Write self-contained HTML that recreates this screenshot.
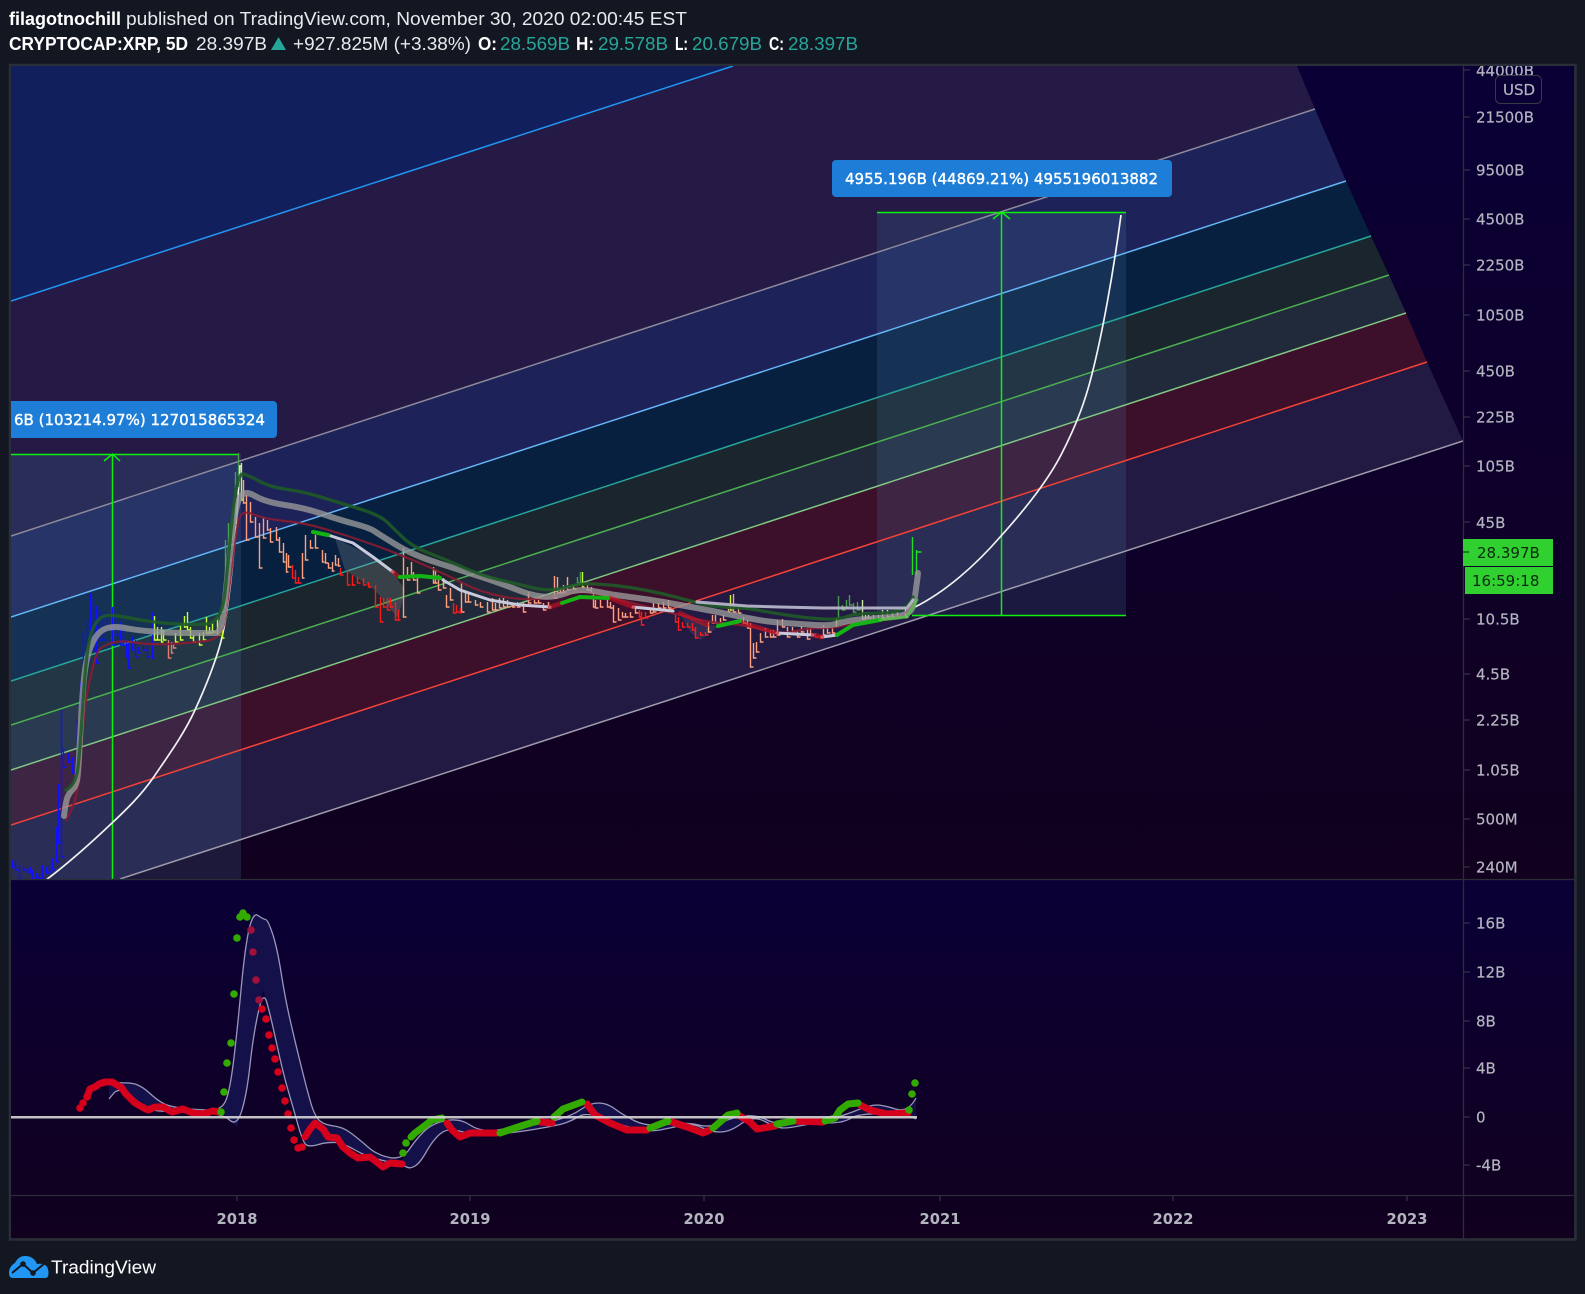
<!DOCTYPE html>
<html><head><meta charset="utf-8"><title>CRYPTOCAP:XRP</title>
<style>html,body{margin:0;padding:0;background:#131722;width:1585px;height:1294px;overflow:hidden}svg{display:block}
.a{font:15px "DejaVu Sans",sans-serif;fill:#b2b5be;stroke:#b2b5be;stroke-width:.2}.h{font:18px "Liberation Sans",sans-serif;fill:#e8e9ec}.b{font-weight:bold;fill:#fff}.t{fill:#26a69a}
.x{font:bold 14.7px "DejaVu Sans",sans-serif;fill:#b2b5be;text-anchor:middle}</style></head><body>
<svg width="1585" height="1294" viewBox="0 0 1585 1294" xmlns="http://www.w3.org/2000/svg">
<defs>
<linearGradient id="g1" x1="0" y1="0" x2="0" y2="1"><stop offset="0" stop-color="#0a0036"/><stop offset="1" stop-color="#11001e"/></linearGradient>
<clipPath id="c"><rect x="11" y="66" width="1452" height="813"/></clipPath>
<clipPath id="ca"><rect x="1464" y="66" width="110" height="813"/></clipPath>
</defs>
<rect width="1585" height="1294" fill="#131722"/>
<text class="h" y="25"><tspan class="b" x="9">filagotnochill</tspan></text>
<text class="h" x="126" y="25" textLength="561" lengthAdjust="spacingAndGlyphs">published on TradingView.com, November 30, 2020 02:00:45 EST</text>
<text class="h b" x="9" y="50" textLength="179" lengthAdjust="spacingAndGlyphs">CRYPTOCAP:XRP, 5D</text>
<text class="h" x="196" y="50" textLength="71" lengthAdjust="spacingAndGlyphs">28.397B</text>
<path d="M278.500 37L286 50H271Z" fill="#26a69a"/>
<text class="h" x="293" y="50" textLength="178" lengthAdjust="spacingAndGlyphs">+927.825M (+3.38%)</text>
<text class="h b" x="478" y="50" textLength="19" lengthAdjust="spacingAndGlyphs">O:</text><text class="h t" x="500" y="50" textLength="70" lengthAdjust="spacingAndGlyphs">28.569B</text>
<text class="h b" x="576" y="50" textLength="18" lengthAdjust="spacingAndGlyphs">H:</text><text class="h t" x="598" y="50" textLength="70" lengthAdjust="spacingAndGlyphs">29.578B</text>
<text class="h b" x="675" y="50" textLength="13" lengthAdjust="spacingAndGlyphs">L:</text><text class="h t" x="692" y="50" textLength="70" lengthAdjust="spacingAndGlyphs">20.679B</text>
<text class="h b" x="769" y="50" textLength="15" lengthAdjust="spacingAndGlyphs">C:</text><text class="h t" x="788" y="50" textLength="70" lengthAdjust="spacingAndGlyphs">28.397B</text>

<rect x="10" y="65" width="1565.500" height="1174.500" fill="none" stroke="#2a2e39" stroke-width="2.500"/>
<rect x="11" y="66" width="1563" height="813" fill="url(#g1)"/>
<rect x="11" y="880" width="1563" height="358" fill="url(#g1)"/>

<g clip-path="url(#c)">
<polygon points="11,66 733,66 11,301" fill="#11205c"/>
<polygon points="11,301 733,66 1297,66 1315,109 11,536" fill="#241a45"/>
<polygon points="11,536 1315,109 1346,181 11,617" fill="#1d2258"/>
<polygon points="11,617 1346,181 1371,236 11,681" fill="#08203f"/>
<polygon points="11,681 1371,236 1389,275 11,725" fill="#1a252e"/>
<polygon points="11,725 1389,275 1406,313 11,770" fill="#212a3b"/>
<polygon points="11,770 1406,313 1427,362 11,825" fill="#3c0f2b"/>
<polygon points="11,825 1427,362 1463,441 120,879 11,879" fill="#221a42"/>
<rect x="11" y="454" width="230" height="425" fill="#4b7daa" opacity=".2"/>
<rect x="877" y="212" width="249" height="403" fill="#4b7daa" opacity=".2"/>
<g fill="none" stroke-width="1.500">
<path d="M11 301L733 66" stroke="#2196f3"/>
<path d="M11 536L1315 109" stroke="#8d8a9c"/>
<path d="M11 617L1346 181" stroke="#64b5f6"/>
<path d="M11 681L1371 236" stroke="#26a69a"/>
<path d="M11 725L1389 275" stroke="#4caf50"/>
<path d="M11 770L1406 313" stroke="#81c784"/>
<path d="M11 825L1427 362" stroke="#f44336"/>
<path d="M120 879L1463 441" stroke="#9d9bab"/>
</g>
<g fill="none" stroke="#0cf00c" stroke-width="1.500">
<path d="M11 454.500H238M112.500 879V454M104 461L112.500 454L120 461"/>
<path d="M877 212.500H1126M1001.500 615V212M993 219L1001.500 212L1010 219M912 615.500H1126"/>
</g>
<g fill="none" stroke="#f2f2f2" stroke-width="1.700" stroke-linejoin="round">
<path d="M46 880C70 862 92 842 112 823C128 808 142 794 153 778C168 756 184 734 195 710C206 686 214 666 220 645C226 624 230 590 233 560C236 530 238 500 240 465"/>
<path d="M915 607C945 592 975 566 1001 536C1028 506 1048 480 1061 455C1078 422 1086 398 1092 374C1102 335 1113 275 1121 215"/>
</g>
<polygon points="335,538 373,557 393,572 405,590 398,618 375,590 345,570" fill="#b4b4b4" opacity=".2"/>
<polygon points="680,613 707,625 720,626 700,640 690,632" fill="#b4b4b4" opacity=".12"/>
<g fill="none" stroke-width="1.400" transform="translate(.5 0)">
<path stroke="#1010ff" d="M12 860V867h3M15 862V870h3M19 865V879h3M23 867V870h3M27 868V872h3M30 867V873h2M32 870V879h3M36 873V878h3M39 874V879h3M42 865V879h3M46 867V873h3M49 865V872h3M52 858V870h3M56 827V862h3M58 784V843h3M61 710V857h3M63 748V767h3M68 753V762h3M72 757V773h3M75 755V772h2M77 719V757h3M80 682V707h2M83 632V667h3M87 620V660h3M90 593V640h3M93 599V650h3M96 606V663h3M99 610V640h3M103 612V640h3M107 613V630h3M112 607V645h3M115 617V635h3M120 622V645h3M123 625V645h3M126 640V657h2M128 643V668h3M132 637V650h3M135 640V657h3M138 647V653h3M143 642V650h3M147 643V657h3M152 612V658h2"/>
<path stroke="#c8ff2e" d="M154 616V640h3M157 627V640h3M161 627V642h2M163 630V640h3M175 633V642h3M180 626V640h3M184 616V627h3M187 612V630h3M190 627V638h3M193 635V642h3M199 633V645h3M203 632V640h3M206 617V633h3M209 627V633h3M212 623V632h3M217 617V635h3M222 625V638h2M241 463V500h2M573 585V589h3M582 572V587h2M730 595V610h2M836 618V627h2"/>
<path stroke="#e07a6a" d="M168 640V658h3M171 642V653h2M173 643V648h3"/>
<path stroke="#4a9c50" d="M225 540V617h2M228 523V560h3M232 517V540h2M235 472V525h2M238 453V487M577 577V583h3M580 572V583h2M838 596V620h3M842 605V610h3M846 600V607h2M849 595V605h3M853 603V612h3M857 602V610h3"/>
<path stroke="#ffa07e" d="M243 480V503h3M246 495V540h3M250 502V522h3M255 517V537h3M259 523V568h3M263 518V538h3M267 520V530h2M270 528V542h3M276 527V540h3M279 537V552h3M283 543V562h2M286 553V572h2M288 555V567h3M302 553V578h2M305 535V560h3M310 540V548h3M315 535V548h3M322 550V562h2M325 553V563h3M328 563V568h3M332 562V571h2M335 555V565h2M338 558V566h2M403 548V617h3M407 567V580h3M411 562V575h2M413 572V580h3M417 578V593h3M433 567V583h2M435 570V583h2M438 575V590h3M443 578V588h3M446 595V607h3M450 588V600h3M461 582V612h3M465 592V602h3M468 593V602h3M475 600V605h3M480 602V607h3M487 602V612h3M492 598V610h3M495 603V610h3M499 598V608h3M503 598V607h3M507 600V607h3M512 603V607h3M517 602V607h3M523 603V612h3M528 592V603h3M534 597V603h3M538 600V603h3M543 603V610h3M548 602V608h3M554 576V598h3M557 577V593h3M560 588V593h3M563 585V592h3M567 577V590h3M587 585V590h3M591 587V593h2M593 592V607h2M595 600V608h3M600 600V607h3M607 600V607h3M610 602V608h3M613 605V622h3M618 608V620h3M622 612V617h3M625 613V617h3M630 612V617h3M635 607V613h3M650 608V613h3M653 603V612h3M658 603V608h3M663 602V608h3M668 600V608h3M708 622V632h3M712 615V623h3M715 615V623h3M720 618V623h3M723 615V620h3M728 607V612h2M733 594V612h3M738 607V613h3M743 617V623h3M747 620V628h3M750 623V667h3M753 643V658h3M756 642V652h3M760 633V642h3M765 628V637h3M770 630V637h3M773 630V637h3M777 620V635h3M782 619V627h3M787 627V637h3M792 627V632h3M797 630V637h3M801 626V632h3M807 628V639h3M810 628V635h3M823 625V635h3M827 628V633h3M832 627V633h3"/>
<path stroke="#ff1a1a" d="M292 565V578h3M295 570V583h3M298 577V583h3M340 568V575h3M347 570V585h3M352 575V585h3M357 577V583h3M363 578V585h3M368 582V587h3M375 585V607h3M380 597V622h3M383 598V607h3M387 598V610h3M390 598V607h3M395 602V620h3M398 610V620h2M453 603V613h3M456 605V612h3M460 608V613h1M639 610V617h2M641 612V625h3M645 612V618h3M675 613V622h3M678 617V630h3M682 622V627h3M687 623V627h3M692 623V630h3M695 627V638h3M700 632V635h3M705 632V635h3M815 633V637h3M820 635V638h3"/>
<path stroke="#cfea9a" d="M862 600V619h3M865 615V618h3M868 615V618h3M873 615V620h3M878 615V620h3M882 610V618h3M887 610V617h3M892 612V617h3M897 612V617h3M905 607V617h3"/>
<path stroke="#1fe01f" d="M912 537V575M916 550V575M916 552H921"/>
</g>
<g fill="none" stroke-linejoin="round" stroke-linecap="round">
<path stroke="#8a1c32" stroke-width="2.200" opacity=".9" d="M66 820Q72 810 75 800Q78 790 81.500 745Q85 700 90 679Q95 658 97.500 652.500Q100 647 110 643.500Q120 640 135 642.500Q150 645 170 644Q190 643 206 641Q222 639 225 619.500Q228 600 232.500 561.500Q237 523 240 516.500Q243 510 254 514.500Q265 519 285 521Q305 523 325 529Q345 535 362.500 541Q380 547 396.500 553.500Q413 560 430 567.500Q447 575 463.500 583.500Q480 592 500 596Q520 600 535 599Q550 598 565 594Q580 590 596.500 594Q613 598 630 602.500Q647 607 663.500 611Q680 615 696.500 619Q713 623 730 624Q747 625 763.500 630Q780 635 793.500 631.500Q807 628 822 628Q837 628 843.500 625.500Q850 623 878.500 620.500Q907 618 913 603"/>
<path stroke="#9a9a9a" stroke-width="6" opacity=".78" d="M64 816Q66 800 68 796Q70 792 73 789Q76 786 77 780.500Q78 775 79 757.500Q80 740 81 720Q82 700 83.500 683.500Q85 667 87.500 656.500Q90 646 95 638Q100 630 107.500 628Q115 626 125 628Q135 630 152.500 631.500Q170 633 190 633Q210 633 216 633Q222 633 225 600Q228 567 232 535Q236 503 240.500 496.500Q245 490 255 496Q265 502 285 505Q305 508 322.500 514Q340 520 355 524Q370 528 375 531.500Q380 535 396.500 545Q413 555 436.500 562.500Q460 570 480 576.500Q500 583 515 589Q530 595 541.500 596.500Q553 598 566.500 593Q580 588 596.500 591.500Q613 595 630 597Q647 599 663.500 602Q680 605 696.500 608Q713 611 730 614.500Q747 618 758.500 620Q770 622 785 623Q800 624 815 625Q830 626 840 623Q850 620 865 619Q880 618 895 616.500Q910 615 912.500 607.500Q915 600 918 573"/>
<path stroke="#1f5a28" stroke-width="3.300" opacity=".9" d="M66 790Q76 785 78 767.500Q80 750 82.500 710Q85 670 87.500 651.500Q90 633 95 624.500Q100 616 107.500 615.500Q115 615 132.500 618.500Q150 622 170 623.500Q190 625 206 624Q222 623 225 591.500Q228 560 232.500 516Q237 472 243.500 474Q250 476 260 481.500Q270 487 287.500 489.500Q305 492 322.500 497.500Q340 503 360 509Q380 515 387.500 522.500Q395 530 404 538.500Q413 547 430 553.500Q447 560 463.500 567.500Q480 575 496.500 579Q513 583 531.500 587.500Q550 592 565 587.500Q580 583 596.500 584Q613 585 630 587.500Q647 590 663.500 594Q680 598 696.500 602.500Q713 607 730 607.500Q747 608 760 610.500Q773 613 790 615.500Q807 618 822 619Q837 620 847 616.500Q857 613 882 613Q907 613 913 597"/>
<path stroke="#bcbcd2" stroke-width="3" opacity=".9" d="M697 602L747 606L780 607L823 608L907 608L913 600"/>
<path stroke="#c9c9dc" stroke-width="3" d="M328 535L353 543L373 557L393 572M443 580L460 590L490 600L520 605L550 607M633 607L673 611M777 633L813 635M822 637L837 635"/>
<path stroke="#d0101f" stroke-width="4.500" opacity=".6" d="M393 572L398 576M550 607L562 603M610 598L633 607M680 613L707 625M743 623L777 633M813 635L822 637"/>
<path stroke="#14b414" stroke-width="4" d="M313 532L328 535M400 577L420 576L440 578M562 603L580 597L608 598M718 626L740 621M837 635L853 625L880 620"/>
<path stroke="#4ccc3c" stroke-width="3" opacity=".7" d="M880 620L907 617L917 600"/>
</g>
<rect x="-10" y="401" width="287" height="37" rx="4" fill="#1e7dd6"/>
<text x="14" y="425" style="font:15px 'DejaVu Sans',sans-serif;fill:#fff;stroke:#fff;stroke-width:.4">6B (103214.97%) 127015865324</text>
<rect x="832" y="160" width="340" height="37" rx="4" fill="#1e7dd6"/>
<text x="845" y="184" style="font:15px 'DejaVu Sans',sans-serif;fill:#fff;stroke:#fff;stroke-width:.4">4955.196B (44869.21%) 4955196013882</text>
</g>

<polygon fill="#14104a" points="109,1083 130,1082 143,1087 157,1100 170,1107 200,1110 222,1110 230,1090 237,1033 245,947 253,912 263,919 268,920 277,947 285,997 293,1033 307,1090 315,1117 325,1125 343,1127 360,1140 377,1155 402,1160 417,1138 433,1123 460,1118 480,1132 513,1128 547,1123 573,1115 590,1103 607,1103 623,1115 647,1127 687,1122 710,1128 733,1117 757,1115 777,1125 813,1122 840,1117 870,1105 883,1105 908,1113 916,1098 916,1119 910,1115 860,1113 843,1123 813,1123 790,1128 777,1128 753,1115 730,1132 710,1132 693,1123 670,1128 650,1132 620,1125 587,1112 573,1120 560,1125 513,1133 480,1135 467,1133 447,1128 433,1140 420,1163 410,1169 403,1165 367,1157 343,1143 327,1142 310,1147 303,1143 293,1107 283,1073 270,1013 263,990 253,1037 247,1093 237,1127 222,1113 173,1112 147,1110 133,1097 118,1088 109,1099"/>
<g fill="none" stroke="#9a97b8" stroke-width="1.300" stroke-linejoin="round">
<path d="M109 1083Q130 1082 136.500 1084.500Q143 1087 150 1093.500Q157 1100 163.500 1103.500Q170 1107 185 1108.500Q200 1110 211 1110Q222 1110 226 1100Q230 1090 233.500 1061.500Q237 1033 241 990Q245 947 249 929.500Q253 912 258 915.500Q263 919 265.500 919.500Q268 920 272.500 933.500Q277 947 281 972Q285 997 289 1015Q293 1033 300 1061.500Q307 1090 311 1103.500Q315 1117 320 1121Q325 1125 334 1126Q343 1127 351.500 1133.500Q360 1140 368.500 1147.500Q377 1155 389.500 1157.500Q402 1160 409.500 1149Q417 1138 425 1130.500Q433 1123 446.500 1120.500Q460 1118 470 1125Q480 1132 496.500 1130Q513 1128 530 1125.500Q547 1123 560 1119Q573 1115 581.500 1109Q590 1103 598.500 1103Q607 1103 615 1109Q623 1115 635 1121Q647 1127 667 1124.500Q687 1122 698.500 1125Q710 1128 721.500 1122.500Q733 1117 745 1116Q757 1115 767 1120Q777 1125 795 1123.500Q813 1122 826.500 1119.500Q840 1117 855 1111Q870 1105 876.500 1105Q883 1105 895.500 1109Q908 1113 916 1098"/>
<path d="M109 1099L113.500 1093.500Q118 1088 125.500 1092.500Q133 1097 140 1103.500Q147 1110 160 1111Q173 1112 197.500 1112.500Q222 1113 229.500 1120Q237 1127 242 1110Q247 1093 250 1065Q253 1037 258 1013.500Q263 990 266.500 1001.500Q270 1013 276.500 1043Q283 1073 288 1090Q293 1107 298 1125Q303 1143 306.500 1145Q310 1147 318.500 1144.500Q327 1142 335 1142.500Q343 1143 355 1150Q367 1157 385 1161Q403 1165 406.500 1167Q410 1169 415 1166Q420 1163 426.500 1151.500Q433 1140 440 1134Q447 1128 457 1130.500Q467 1133 473.500 1134Q480 1135 496.500 1134Q513 1133 536.500 1129Q560 1125 566.500 1122.500Q573 1120 580 1116Q587 1112 603.500 1118.500Q620 1125 635 1128.500Q650 1132 660 1130Q670 1128 681.500 1125.500Q693 1123 701.500 1127.500Q710 1132 720 1132Q730 1132 741.500 1123.500Q753 1115 765 1121.500Q777 1128 783.500 1128Q790 1128 801.500 1125.500Q813 1123 828 1123Q843 1123 851.500 1118Q860 1113 885 1114Q910 1115 916 1119"/>
</g>
<g fill="none" stroke-width="7" stroke-linecap="round" stroke-linejoin="round">
<path stroke="#d4001c" d="M87 1097L90 1089L95 1087L99 1084L105 1082L112 1082L117 1085L122 1088L125 1093L130 1098L135 1103L142 1107L148 1110L155 1107L163 1107L172 1112L183 1109L193 1113L203 1114L213 1111L220 1112"/>
<path stroke="#d4001c" d="M305 1137L310 1129L315 1123L323 1129L328 1137L337 1138L343 1147L350 1153L358 1158L370 1157L378 1163L383 1167L390 1163L402 1164M447 1123L452 1130L460 1137L470 1133L480 1133L497 1133M540 1122L552 1123M587 1104L595 1115L610 1123L627 1130L647 1130M672 1122L690 1128L703 1133L710 1130M738 1115L750 1122L757 1129L775 1126M795 1121L823 1122M860 1105L870 1110L887 1114L908 1113"/>
<path stroke="#33aa00" d="M411 1137L415 1133L423 1127L432 1120L442 1118M500 1133L518 1127L537 1121M554 1117L563 1109L582 1102M650 1128L668 1121M713 1128L728 1115L737 1113M777 1124L793 1121M825 1121L835 1118L840 1110L848 1104L858 1103"/>
</g>
<g fill="#d4001c">
<circle cx="80" cy="1108" r="3.800"/><circle cx="83" cy="1103" r="3.800"/><circle cx="87" cy="1097" r="3.800"/>
<circle cx="262" cy="1009" r="3.800"/><circle cx="266" cy="1019" r="3.800"/><circle cx="269" cy="1035" r="3.800"/><circle cx="272" cy="1048" r="3.800"/><circle cx="275" cy="1059" r="3.800"/><circle cx="278" cy="1072" r="3.800"/><circle cx="282" cy="1088" r="3.800"/><circle cx="285" cy="1101" r="3.800"/><circle cx="288" cy="1114" r="3.800"/><circle cx="291" cy="1128" r="3.800"/><circle cx="294" cy="1140" r="3.800"/><circle cx="298" cy="1148" r="3.800"/><circle cx="302" cy="1147" r="3.800"/>
</g>
<g fill="#a0123c"><circle cx="251" cy="930" r="3.800"/><circle cx="253" cy="952" r="3.800"/><circle cx="256" cy="980" r="3.800"/><circle cx="259" cy="1000" r="3.800"/></g>
<g fill="#33aa00"><circle cx="221" cy="1112" r="3.800"/><circle cx="224" cy="1092" r="3.800"/><circle cx="227" cy="1063" r="3.800"/><circle cx="231" cy="1043" r="3.800"/><circle cx="234" cy="994" r="3.800"/><circle cx="237" cy="938" r="3.800"/><circle cx="240" cy="917" r="3.800"/><circle cx="243" cy="913" r="3.800"/><circle cx="247" cy="917" r="3.800"/><circle cx="403" cy="1153" r="3.800"/><circle cx="406" cy="1143" r="3.800"/><circle cx="909" cy="1110" r="3.800"/><circle cx="912" cy="1094" r="3.800"/><circle cx="915" cy="1083" r="3.800"/></g>
<path d="M11 1117.300H917" stroke="#d6d6d6" stroke-width="2.500" opacity=".9"/>

<path d="M11 879.500H1574M11 1195.500H1574M1463.500 66V1239" stroke="#2a2e39" stroke-width="1.300"/>
<path stroke="#3b3e4a" stroke-width="1" d="M1463 70h7M1463 117h7M1463 170h7M1463 219h7M1463 265h7M1463 315h7M1463 371h7M1463 417h7M1463 466h7M1463 522h7M1463 552h7M1463 619h7M1463 674h7M1463 720h7M1463 770h7M1463 819h7M1463 867h7M1463 923h7M1463 972h7M1463 1021h7M1463 1068h7M1463 1117h7M1463 1165h7M237 1196v5M470 1196v5M704 1196v5M940 1196v5M1173 1196v5M1407 1196v5"/>
<g clip-path="url(#ca)"><text class="a" x="1476" y="76">44000B</text></g>
<rect x="1495.500" y="75.500" width="46" height="28" rx="5" fill="#0a0036" stroke="#363a45"/>
<text class="a" x="1503" y="95">USD</text>
<text class="a" x="1476" y="122.500">21500B</text><text class="a" x="1476" y="175.500">9500B</text><text class="a" x="1476" y="224.500">4500B</text><text class="a" x="1476" y="270.500">2250B</text><text class="a" x="1476" y="320.500">1050B</text><text class="a" x="1476" y="376.500">450B</text><text class="a" x="1476" y="422.500">225B</text><text class="a" x="1476" y="471.500">105B</text><text class="a" x="1476" y="528">45B</text><text class="a" x="1476" y="624.500">10.5B</text><text class="a" x="1476" y="679.500">4.5B</text><text class="a" x="1476" y="725.500">2.25B</text><text class="a" x="1476" y="775.500">1.05B</text><text class="a" x="1476" y="824.500">500M</text><text class="a" x="1476" y="872.500">240M</text>
<text class="a" x="1476" y="928.500">16B</text><text class="a" x="1476" y="977.500">12B</text><text class="a" x="1476" y="1026.500">8B</text><text class="a" x="1476" y="1073.500">4B</text><text class="a" x="1476" y="1122.500">0</text><text class="a" x="1476" y="1170.500">-4B</text>
<rect x="1463" y="539" width="90" height="27" fill="#2fd02f"/>
<rect x="1465" y="567" width="88" height="27" fill="#2fd02f"/>
<path d="M1463 552h6" stroke="#0a2a0a"/>
<text x="1477" y="558" style="font:15px 'DejaVu Sans',sans-serif;fill:#0c2a10">28.397B</text>
<text x="1472" y="586" style="font:15px 'DejaVu Sans',sans-serif;fill:#0c2a10">16:59:18</text>
<text class="x" x="237" y="1224">2018</text><text class="x" x="470" y="1224">2019</text><text class="x" x="704" y="1224">2020</text><text class="x" x="940" y="1224">2021</text><text class="x" x="1173" y="1224">2022</text><text class="x" x="1407" y="1224">2023</text>

<path d="M13 1278H45C48 1278 48.500 1276 48.500 1272C48 1267 46 1264.500 42 1264C40 1263.500 38 1264 37 1264C35 1259 31 1256 25 1256C20 1256 17 1259 15 1263C11 1265 9 1269 9 1273C9 1276 10 1278 13 1278Z" fill="#2196f3"/>
<path d="M12 1273L23 1264L33 1273L45 1263" fill="none" stroke="#131722" stroke-width="2"/>
<circle cx="23" cy="1264" r="2.800" fill="#131722"/><circle cx="33" cy="1273" r="2.800" fill="#131722"/>
<text x="51" y="1273.500" textLength="105" lengthAdjust="spacingAndGlyphs" style="font:18px 'Liberation Sans',sans-serif;fill:#fff">TradingView</text>
</svg>
</body></html>
